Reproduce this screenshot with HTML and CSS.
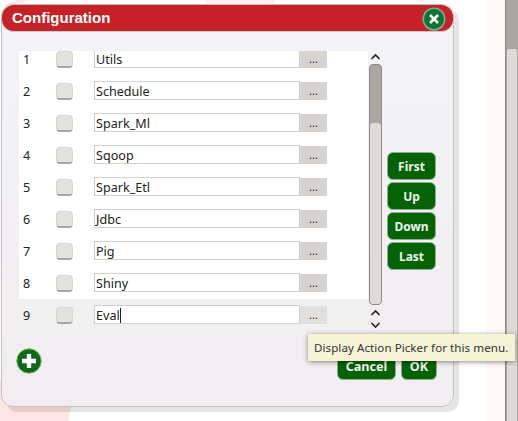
FILE: index.html
```html
<!DOCTYPE html>
<html>
    <head>
        <title>Configuration</title>
        <meta charset="UTF-8">
        <link rel="stylesheet" href="styles.css">
    </head>
    <body>
        <div class="desk">
            <div class="pink-top-a"></div>
            <div class="pink-top-b"></div>
            <div class="pink-left"></div>
            <div class="pink-right"></div>
            <div class="dialog">
                <div class="titlebar">
                    <span class="title">Configuration</span>
                    <svg class="close" width="24" height="24" viewBox="0 0 24 24">
                        <circle cx="12" cy="12" r="11.5" fill="#7fae93"/>
                        <circle cx="12" cy="12" r="10" fill="#0b7433"/>
                        <path d="M8 8l8 8M16 8l-8 8" stroke="#fff" stroke-width="2.6"/>
                    </svg>
                </div>
                <div class="content">
                    <div class="main">
                        <div class="list">
                            <div class="clip">
                                <div class="rows">
                                    <div class="row"><span class="num">1</span><span class="check"></span><span class="name">Utils</span><span class="pick">...</span></div>
                                    <div class="row"><span class="num">2</span><span class="check"></span><span class="name">Schedule</span><span class="pick">...</span></div>
                                    <div class="row"><span class="num">3</span><span class="check"></span><span class="name">Spark_Ml</span><span class="pick">...</span></div>
                                    <div class="row"><span class="num">4</span><span class="check"></span><span class="name">Sqoop</span><span class="pick">...</span></div>
                                    <div class="row"><span class="num">5</span><span class="check"></span><span class="name">Spark_Etl</span><span class="pick">...</span></div>
                                    <div class="row"><span class="num">6</span><span class="check"></span><span class="name">Jdbc</span><span class="pick">...</span></div>
                                    <div class="row"><span class="num">7</span><span class="check"></span><span class="name">Pig</span><span class="pick">...</span></div>
                                    <div class="row"><span class="num">8</span><span class="check"></span><span class="name">Shiny</span><span class="pick">...</span></div>
                                    <div class="row hover"><span class="num">9</span><span class="check"></span><span class="name">Eval<i class="caret"></i></span><span class="pick">...</span></div>
                                </div>
                            </div>
                            <div class="scroller">
                                <svg class="arrow" width="13" height="8" viewBox="0 0 13 8"><path d="M2.5 6l4-4 4 4" fill="none" stroke="#222" stroke-width="1.6"/></svg>
                                <div class="track"><div class="thumb"></div></div>
                                <svg class="arrow" width="13" height="8" viewBox="0 0 13 8"><path d="M2.5 6l4-4 4 4" fill="none" stroke="#222" stroke-width="1.6"/></svg>
                                <svg class="arrow down" width="13" height="8" viewBox="0 0 13 8"><path d="M2.5 2l4 4 4-4" fill="none" stroke="#222" stroke-width="1.6"/></svg>
                            </div>
                        </div>
                        <div class="moves">
                            <div class="btn">First</div>
                            <div class="btn">Up</div>
                            <div class="btn">Down</div>
                            <div class="btn">Last</div>
                        </div>
                    </div>
                    <div class="foot">
                        <svg class="add" width="26" height="26" viewBox="0 0 26 26">
                            <circle cx="13" cy="13" r="12.2" fill="#0c6a1e" stroke="#7cb342" stroke-width="1"/>
                            <path d="M13 6v14M6 13h14" stroke="#fff" stroke-width="4.4"/>
                        </svg>
                        <div class="actions">
                            <div class="btn cancel">Cancel</div>
                            <div class="btn ok">OK</div>
                        </div>
                    </div>
                </div>
            </div>
            <div class="pagebar"><div class="pagethumb"></div></div>
            <div class="tooltip">Display Action Picker for this menu.</div>
        </div>
    </body>
</html>
```

FILE: styles.css
```css
html, body {
    margin: 0;
    height: 100%;
    overflow: hidden;
    background: #fff;
}
.desk {
    position: relative;
    width: 518px;
    height: 421px;
    overflow: hidden;
    font-family: "Noto Sans", sans-serif;
    font-size: 12.6px;
    color: #222;
}
.pink-top-a {
    position: absolute;
    left: 5px;
    top: 0;
    width: 26px;
    height: 5px;
    background: #fde6e6;
    clip-path: polygon(6px 5px, 26px 0, 12px 0, 0 5px);
}
.pink-top-b {
    position: absolute;
    left: 205px;
    top: 0;
    width: 69px;
    height: 5px;
    background: #fdeeee;
}
.pink-left {
    position: absolute;
    left: 0;
    top: 380px;
    width: 76px;
    height: 41px;
    background: #ffe4e6;
    clip-path: polygon(0 0, 76px 0, 68px 41px, 0 41px);
}
.pink-right {
    position: absolute;
    left: 487px;
    top: 0;
    width: 18px;
    height: 421px;
    background: #fff8f7;
}
.dialog {
    position: absolute;
    left: 1px;
    top: 4px;
    width: 453px;
    height: 403px;
    box-sizing: border-box;
    border: 1px solid #c4c0bc;
    border-radius: 12px;
    box-shadow: 5px 5px 0 rgba(0, 0, 0, .1);
    background: linear-gradient(#f3f3f7, #f1edf1);
    display: flex;
    flex-direction: column;
}
.titlebar {
    height: 26px;
    flex: none;
    display: flex;
    align-items: center;
    justify-content: space-between;
    padding: 0 7px 0 10px;
    background: #c62127;
    border-radius: 12px;
    border-bottom: 1px solid #cfcac6;
}
.title {
    font-family: "Liberation Sans", sans-serif;
    font-weight: bold;
    font-size: 15px;
    color: #fff;
    padding-bottom: 2px;
}
.close {
    flex: none;
    margin-top: 2px;
}
.content {
    flex: 1;
    display: flex;
    flex-direction: column;
    padding: 19px 0 0 17px;
}
.main {
    display: flex;
}
.list {
    display: flex;
}
.clip {
    width: 349px;
    height: 280px;
    overflow: hidden;
}
.rows {
    margin-top: -8px;
}
.row {
    height: 32px;
    display: flex;
    align-items: center;
    background: #fff;
}
.row.hover {
    background: #f0f0f0;
}
.num {
    width: 37px;
    padding-left: 4px;
    box-sizing: border-box;
}
.check {
    width: 17px;
    height: 17px;
    box-sizing: border-box;
    border: 1px solid #d8d5d2;
    border-bottom: 2px solid #a8a4a0;
    border-radius: 4px;
    background: #e4e2df;
    margin-right: 21px;
}
.name {
    width: 206px;
    height: 19px;
    margin-top: -1px;
    box-sizing: border-box;
    border: 1px solid #d3cfcb;
    background: #fff;
    padding-left: 1px;
    line-height: 19px;
}
.caret {
    display: inline-block;
    width: 1px;
    height: 15px;
    background: #222;
    vertical-align: -3px;
}
.pick {
    width: 27px;
    height: 18px;
    background: #d6d3d0;
    text-align: center;
    line-height: 18px;
    font-size: 11px;
}
.hover .pick {
    background: #e2e0de;
}
.scroller {
    width: 14px;
    display: flex;
    flex-direction: column;
    align-items: center;
    padding-top: 2px;
}
.arrow {
    flex: none;
}
.track {
    width: 13px;
    height: 241px;
    margin: 3px 0 4px;
    box-sizing: border-box;
    border: 1px solid #8f8a86;
    border-radius: 4px;
    background: #aca5a0;
    padding-top: 58px;
}
.thumb {
    height: 100%;
    border-radius: 3px;
    background: #dedbd8;
}
.down {
    margin-top: 4px;
}
.moves {
    display: flex;
    flex-direction: column;
    gap: 2px;
    margin: 101px 0 0 5px;
}
.btn {
    width: 49px;
    height: 28px;
    box-sizing: border-box;
    background: #056305;
    border: 1px solid #8fae8f;
    border-radius: 6px;
    color: #eef4ee;
    font-weight: bold;
    font-size: 12px;
    text-align: center;
    line-height: 27px;
}
.foot {
    display: flex;
    justify-content: space-between;
    padding-right: 16px;
    margin-top: 17px;
}
.add {
    margin-left: -3px;
    flex: none;
}
.actions {
    display: flex;
    gap: 5px;
    margin-top: 4px;
}
.actions .btn {
    font-size: 12.6px;
}
.cancel {
    width: 59px;
}
.btn.ok {
    width: 36px;
}
.tooltip {
    position: absolute;
    left: 308px;
    top: 334px;
    width: 207px;
    height: 27px;
    box-sizing: border-box;
    background: #f5f3d6;
    box-shadow: 0 1px 5px rgba(0, 0, 0, .45);
    font-size: 11.6px;
    letter-spacing: .05px;
    line-height: 27px;
    padding-left: 6px;
    color: #333;
    white-space: nowrap;
}
.pagebar {
    position: absolute;
    left: 505px;
    top: 0;
    width: 13px;
    height: 421px;
    box-sizing: border-box;
    border-left: 1px solid #8f8a86;
    background: #aca5a0;
    padding: 49px 1px 0 1px;
}
.pagethumb {
    height: 100%;
    background: #dedbd8;
    border-radius: 3px 3px 0 0;
}
```
